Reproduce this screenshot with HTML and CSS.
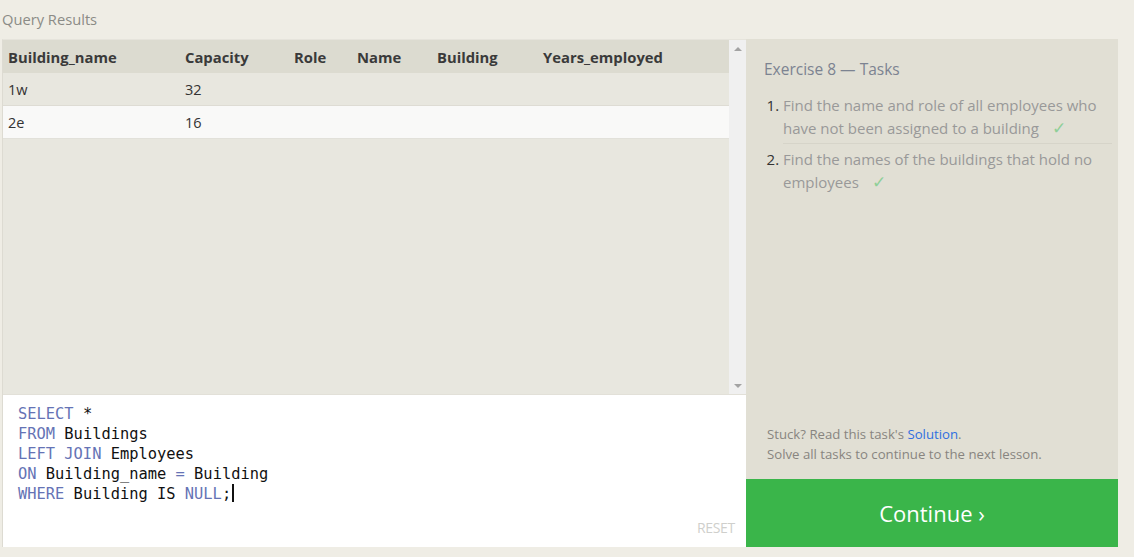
FILE: index.html
```html
<!DOCTYPE html>
<html>
<head>
<meta charset="utf-8">
<title>Query Results</title>
<link rel="stylesheet" href="styles.css">
</head>
<body>
<div class="title">Query Results</div>
<div class="main">
  <div class="left">
    <div class="results">
      <div class="table-wrap">
        <table class="grid">
          <colgroup>
            <col class="c1"><col class="c2"><col class="c3"><col class="c4"><col class="c5"><col class="c6">
          </colgroup>
          <thead>
            <tr><th>Building_name</th><th>Capacity</th><th>Role</th><th>Name</th><th>Building</th><th>Years_employed</th></tr>
          </thead>
          <tbody>
            <tr class="odd"><td>1w</td><td>32</td><td></td><td></td><td></td><td></td></tr>
            <tr class="even"><td>2e</td><td>16</td><td></td><td></td><td></td><td></td></tr>
          </tbody>
        </table>
      </div>
      <div class="scrollbar">
        <span class="arrow up"></span>
        <span class="arrow down"></span>
      </div>
    </div>
    <div class="editor">
      <pre class="code"><span class="kw">SELECT</span> *
<span class="kw">FROM</span> Buildings
<span class="kw">LEFT JOIN</span> Employees
<span class="kw">ON</span> Building_name <span class="kw">=</span> Building
<span class="kw">WHERE</span> Building IS <span class="kw">NULL</span>;<span class="cursor"></span></pre>
      <div class="reset">RESET</div>
    </div>
  </div>
  <div class="right">
    <div class="tasks">
      <h2 class="tasks-title">Exercise 8 — Tasks</h2>
      <ol class="task-list">
        <li>Find the name and role of all employees who have not been assigned to a building<span class="check">✓</span></li>
        <li>Find the names of the buildings that hold no employees<span class="check">✓</span></li>
      </ol>
    </div>
    <div class="hint">
      <p>Stuck? Read this task's <a class="link" href="#">Solution</a>.</p>
      <p>Solve all tasks to continue to the next lesson.</p>
    </div>
    <div class="continue">Continue ›</div>
  </div>
</div>
</body>
</html>
```

FILE: styles.css
```css
html, body {
  margin: 0;
  padding: 0;
}
body {
  background: #efede5;
  font-family: "Open Sans", "Noto Sans", sans-serif;
  width: 1134px;
  height: 557px;
  overflow: hidden;
}
.title {
  padding: 9px 0 0 2px;
  height: 39px;
  box-sizing: border-box;
  font-size: 14.7px;
  color: #8b8b86;
  line-height: 20px;
}
.main {
  display: flex;
  margin-left: 2px;
  height: 508px;
  width: 1116px;
}
.left {
  width: 744px;
  display: flex;
  flex-direction: column;
  border-left: 1px solid #dddbd2;
  border-top: 1px solid #e6e4dc;
  box-sizing: border-box;
}
.results {
  display: flex;
  height: 354px;
  background: #e8e7df;
}
.table-wrap {
  flex: 1;
}
.grid {
  border-collapse: collapse;
  width: 726px;
  table-layout: fixed;
  font-size: 14.5px;
  color: #333;
}
.c1 { width: 177px; }
.c2 { width: 109px; }
.c3 { width: 63px; }
.c4 { width: 80px; }
.c5 { width: 106px; }
.grid th {
  background: #dcdbd0;
  text-align: left;
  font-weight: 700;
  font-size: 14.8px;
  color: #3a3a3a;
  height: 33px;
  padding: 0 0 0 5px;
  white-space: nowrap;
}
.grid td {
  height: 31px;
  padding: 1px 0 0 5px;
  border-bottom: 1px solid #dedcd4;
}
.grid tr.odd td { background: #e8e7df; }
.grid tr.even td { background: #f9f9f8; border-bottom-color: #e2e1da; }
.scrollbar {
  width: 17px;
  background: #f0f0f0;
  position: relative;
}
.arrow {
  position: absolute;
  left: 5px;
  width: 0;
  height: 0;
  border-left: 4px solid transparent;
  border-right: 4px solid transparent;
}
.arrow.up {
  top: 7px;
  border-bottom: 4px solid #a3a3a3;
}
.arrow.down {
  bottom: 6px;
  border-top: 4px solid #a3a3a3;
}
.editor {
  flex: 1;
  background: #fff;
  border-top: 1px solid #e2e0d8;
  position: relative;
}
.code {
  margin: 0;
  padding: 9px 0 0 15px;
  font-family: "DejaVu Sans Mono", "Liberation Mono", monospace;
  font-size: 15.4px;
  line-height: 20px;
  color: #111;
}
.kw { color: #6573b5; }
.cursor {
  display: inline-block;
  width: 2px;
  height: 18px;
  background: #111;
  vertical-align: -3px;
  margin-left: 1px;
}
.reset {
  position: absolute;
  right: 11px;
  bottom: 10px;
  font-size: 14px;
  color: #cfcfcc;
  letter-spacing: -0.3px;
}
.right {
  width: 372px;
  background: #e1dfd4;
  display: flex;
  flex-direction: column;
}
.tasks {
  flex: 1;
  padding: 19px 6px 0 18px;
}
.tasks-title {
  margin: 0 0 14px;
  font-weight: 400;
  font-size: 15.5px;
  color: #7c8391;
  line-height: 22px;
}
.task-list {
  margin: 0;
  padding: 0 0 0 19px;
  font-size: 15px;
  line-height: 23px;
  color: #333;
}
.task-list li {
  padding: 0 0 3px 0;
  margin-bottom: 4px;
  border-bottom: 1px solid #d6d4c9;
  color: #999;
}
.task-list li:last-child {
  border-bottom: none;
}
.task-list li::marker {
  color: #333;
}
.check {
  display: inline-block;
  color: #8fcf98;
  margin-left: 13px;
  font-size: 17px;
  line-height: 20px;
}
.hint {
  padding: 0 10px 15px 21px;
  font-size: 13.2px;
  line-height: 20px;
  color: #888580;
}
.hint p { margin: 0; }
.link {
  color: #2f6fe0;
  text-decoration: none;
}
.continue {
  height: 68px;
  background: #3ab54a;
  color: #fff;
  font-size: 22px;
  display: flex;
  align-items: center;
  justify-content: center;
}
```
